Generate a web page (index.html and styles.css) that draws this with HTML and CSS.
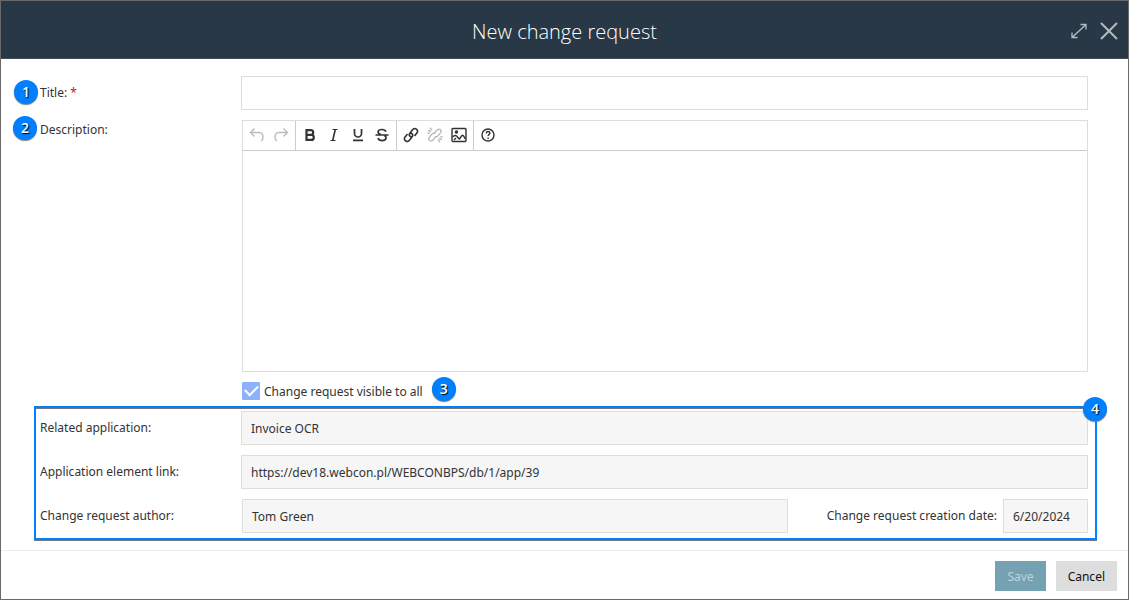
FILE: index.html
```html
<!DOCTYPE html>
<html lang="en">
<head>
<meta charset="utf-8">
<meta name="viewport" content="width=device-width, initial-scale=1">
<title>New change request</title>
<link rel="stylesheet" href="styles.css">
</head>
<body>
<main class="dialog">
  <header class="dialog-header">
    <h1 class="dialog-title">New change request</h1>
    <div class="window-actions">
      <button class="icon-button" type="button" aria-label="Expand">
        <svg width="16" height="16" viewBox="0 0 16 16" fill="none" stroke="currentColor" stroke-width="1.3"><path d="M1 14.500 15 1.500M9.500 1.500H15v5M1 9.500v5h5.500"/></svg>
      </button>
      <button class="icon-button" type="button" aria-label="Close">
        <svg width="18" height="18" viewBox="0 0 18 18" fill="none" stroke="currentColor" stroke-width="2"><path d="M1 1l16 16M17 1 1 17"/></svg>
      </button>
    </div>
  </header>

  <form class="dialog-form">
    <div class="form-body">
      <div class="row">
        <label class="label" for="title">Title: <span class="required">*</span><span class="badge badge-title">1</span></label>
        <input class="field" id="title" type="text">
      </div>

      <div class="row row-grow">
        <label class="label" for="description">Description:<span class="badge badge-description">2</span></label>
        <div class="editor">
          <div class="toolbar" role="toolbar" aria-label="Formatting">
            <div class="tool-group">
              <button class="tool" type="button" aria-label="Undo" disabled><svg class="tool-icon" viewBox="0 0 16 16"><path d="M5.500 1.500 1.500 5.500l4 4M1.500 5.500h8.500q4 .3 4 4.500 0 2.500-1.800 4"/></svg></button>
              <button class="tool" type="button" aria-label="Redo" disabled><svg class="tool-icon" viewBox="0 0 16 16"><path d="m10.500 1.500 4 4-4 4M14.500 5.500H6q-4 .3-4 4.500 0 2.500 1.800 4"/></svg></button>
            </div>
            <div class="tool-group">
              <button class="tool" type="button" aria-label="Bold"><svg class="tool-icon" viewBox="0 0 16 16"><path stroke-width="2.200" d="M4.500 3.100h4.300a2.300 2.300 0 0 1 0 4.800H4.500zM4.500 7.900h4.800a2.500 2.500 0 0 1 0 5H4.500z"/></svg></button>
              <button class="tool" type="button" aria-label="Italic"><svg class="tool-icon" viewBox="0 0 16 16"><path stroke-width="1.200" d="M6.500 2.500h5M4.500 13.500h5"/><path stroke-width="1.600" d="M9.300 2.500 6.700 13.500"/></svg></button>
              <button class="tool" type="button" aria-label="Underline"><svg class="tool-icon" viewBox="0 0 16 16"><path stroke-width="1.700" d="M4.500 2v4.500a3.500 3.500 0 0 0 7 0V2M3 13.300h10"/></svg></button>
              <button class="tool" type="button" aria-label="Strikethrough"><svg class="tool-icon" viewBox="0 0 16 16"><path stroke-width="1.700" d="M12 4.700Q11 2.500 8 2.500c-5 0-5 4.200-1 5M4 11q.8 2.600 4.200 2.600c4.300 0 4.800-3.600 2.300-5.100M1.500 8h13"/></svg></button>
            </div>
            <div class="tool-group">
              <button class="tool" type="button" aria-label="Link"><svg class="tool-icon" viewBox="0 0 16 16"><path stroke-width="1.600" d="M9.500 9.800c-2.900.4-4.200-1.800-2.500-3.800l2.800-3.500c2.200-2.400 6 .4 4.300 3.300L11.500 9M6.500 6.200c2.900-.4 4.200 1.800 2.500 3.800l-2.800 3.500c-2.200 2.400-6-.4-4.300-3.300L4.500 7"/></svg></button>
              <button class="tool" type="button" aria-label="Unlink" disabled><svg class="tool-icon" viewBox="0 0 16 16"><path d="M7 6.500 9.800 3.200c2.200-2.300 5.300.1 3.800 2.500L11 9q-1.500 1.400-3.300.4M8.800 9.500 6 13c-2.200 2.300-5.300-.1-3.800-2.500L5 7q1.500-1.400 3.300-.4M1 3.500l3 1M3 .8l2 2.500M.5 6.300h2.200M12 11.500l3 1M11 12.700l2 2.500M13.300 9.700h2.200"/></svg></button>
              <button class="tool" type="button" aria-label="Insert image"><svg class="tool-icon" viewBox="0 0 16 16"><rect x="1" y="1.500" width="14" height="13" rx="1"/><circle cx="5.500" cy="5" r="1" fill="currentColor"/><path d="M1.500 10q3-3 5 0l2.200 2.500M3 13l2-2M8.500 12l2.300-3.300q.7-1 1.500 0L14.500 12"/></svg></button>
            </div>
            <div class="tool-group">
              <button class="tool" type="button" aria-label="Help"><svg class="tool-icon" viewBox="0 0 16 16"><circle cx="8" cy="8" r="6"/><path d="M6.200 6.300q.2-1.800 1.900-1.800t1.800 1.600c0 1.300-1.800 1.500-1.800 3M8.100 10.500v1.500"/></svg></button>
            </div>
          </div>
          <textarea class="editor-text" id="description"></textarea>
        </div>
      </div>

      <div class="row">
        <div class="check-line">
          <input class="check" id="visible" type="checkbox" checked>
          <label class="check-label" for="visible">Change request visible to all</label>
          <span class="badge badge-visible">3</span>
        </div>
      </div>

      <section class="details">
        <span class="badge badge-details">4</span>
        <div class="row">
          <label class="label" for="application">Related application:</label>
          <input class="field" id="application" type="text" value="Invoice OCR" readonly>
        </div>
        <div class="row">
          <label class="label" for="link">Application element link:</label>
          <input class="field" id="link" type="text" value="https://dev18.webcon.pl/WEBCONBPS/db/1/app/39" readonly>
        </div>
        <div class="row">
          <label class="label" for="author">Change request author:</label>
          <div class="author-line">
            <input class="field" id="author" type="text" value="Tom Green" readonly>
            <div class="date-line">
              <label class="label" for="created">Change request creation date:</label>
              <input class="field field-date" id="created" type="text" value="6/20/2024" readonly>
            </div>
          </div>
        </div>
      </section>
    </div>

    <footer class="dialog-footer">
      <button class="button button-save" type="submit" disabled>Save</button>
      <button class="button" type="button">Cancel</button>
    </footer>
  </form>
</main>
</body>
</html>
```
FILE: styles.css
```css
* {
  box-sizing: border-box;
}

body {
  margin: 0;
  color: #333;
  background: #fff;
  font: 12px/18px "Noto Sans", "Open Sans", sans-serif;
}

button,
input,
textarea {
  font: inherit;
  color: inherit;
}

.dialog {
  display: flex;
  flex-direction: column;
  min-height: 100vh;
  border: 1px solid #696969;
}

.dialog-header {
  display: grid;
  grid-template-columns: 1fr auto 1fr;
  align-items: center;
  min-height: 58px;
  padding: 0 10px;
  color: #fff;
  background: #293846;
  border-bottom: 1px solid #3f4c58;
}

.dialog-title {
  grid-column: 2;
  margin: 0;
  padding-top: 4px;
  font: 300 20px/28px "Open Sans", "Noto Sans", sans-serif;
}

.window-actions {
  display: flex;
  justify-content: flex-end;
  align-items: center;
  gap: 13px;
  padding-top: 3px;
}

.icon-button {
  display: flex;
  padding: 0;
  color: #b4bbc1;
  background: none;
  border: 0;
}

.dialog-form {
  display: flex;
  flex: 1;
  flex-direction: column;
}

.form-body {
  display: flex;
  flex: 1;
  flex-direction: column;
  gap: 10px;
  padding: 17px 40px 10px 39px;
}

.row {
  display: grid;
  grid-template-columns: 201px 1fr;
}

.row-grow {
  flex: 1;
}

.label {
  position: relative;
  padding-top: 8px;
}

.required {
  color: #e30613;
}

.field {
  width: 100%;
  min-width: 0;
  height: 34px;
  padding: 1px 9px 0;
  background: #fff;
  border: 1px solid #ddd;
}

.field:read-only {
  background: #f6f6f6;
}

.editor {
  display: flex;
  flex-direction: column;
  margin-left: 1px;
  border: 1px solid #ddd;
}

.toolbar {
  display: flex;
  height: 30px;
  border-bottom: 1px solid #ccc;
}

.tool-group {
  display: flex;
  align-items: center;
  padding: 0 2px 2px;
}

.tool-group + .tool-group {
  border-left: 1px solid #ccc;
}

.tool {
  display: flex;
  justify-content: center;
  width: 24px;
  padding: 0;
  background: none;
  border: 0;
}

.tool:disabled {
  color: #bcbcbc;
}

.tool-icon {
  width: 16px;
  height: 16px;
  fill: none;
  stroke: currentColor;
  stroke-width: 1.4;
}

.editor-text {
  flex: 1;
  min-height: 120px;
  padding: 10px;
  border: 0;
  resize: none;
}

.check-line {
  display: flex;
  grid-column: 2;
  align-items: center;
  gap: 4px;
  height: 18px;
  padding-left: 1px;
}

.check {
  display: grid;
  place-items: center;
  appearance: none;
  width: 18px;
  height: 18px;
  margin: 0;
  background: #8fb1fb;
  border-radius: 1px;
}

.check:checked::before {
  width: 11px;
  height: 6px;
  margin-bottom: 4px;
  border: solid #fff;
  border-width: 0 0 2px 2px;
  content: "";
  transform: rotate(-45deg);
}

.check-label {
  padding-top: 2px;
}

.details {
  position: relative;
  display: flex;
  flex-direction: column;
  gap: 10px;
  margin: -4px -9px 0 -6px;
  padding: 3px 7px 5px 4px;
  border: 2px solid #0080ff;
  box-shadow: 0 1px #777, inset 0 1px #777;
}

.author-line {
  display: grid;
  grid-template-columns: 1fr 300px;
  padding-left: 1px;
}

.date-line {
  display: flex;
  justify-content: flex-end;
  gap: 6px;
}

.date-line .label {
  white-space: nowrap;
}

.field-date {
  width: 85px;
}

.badge {
  position: absolute;
  display: grid;
  place-items: center;
  width: 24px;
  height: 24px;
  color: #fff;
  background: #0080ff;
  border-radius: 50%;
  box-shadow: 0 1px 1px #777;
  font: 600 14px/20px "Open Sans", sans-serif;
  text-shadow: 1px 1px 1px #000;
}

.badge-title {
  top: 4px;
  left: -26px;
}

.badge-description {
  top: -4px;
  left: -27px;
}

.row-grow .label {
  padding-top: 1px;
}

.badge-visible {
  position: static;
  margin-bottom: 4px;
  margin-left: 5px;
}

.badge-details {
  top: -11px;
  right: -12px;
}

.dialog-footer {
  display: flex;
  justify-content: flex-end;
  gap: 10px;
  padding: 10px 11px 8px;
  border-top: 1px solid #ececec;
}

.button {
  height: 30px;
  padding: 1px 12px 0;
  color: #111;
  background: #ddd;
  border: 0;
}

.button-save {
  color: #bdd2da;
  background: #75a2b2;
}
```
